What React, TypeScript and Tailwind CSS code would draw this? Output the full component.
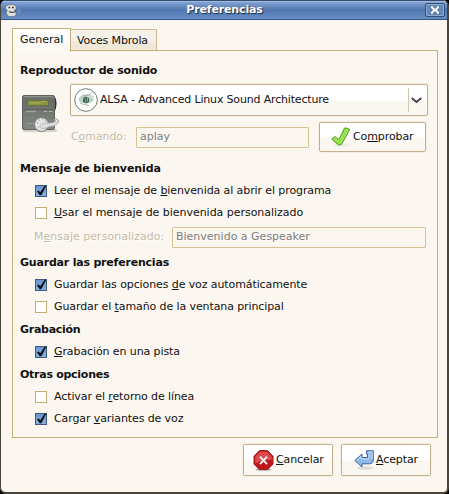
import type { ReactNode } from 'react';

function Key({ children }: { children: ReactNode }) {
  return <span className="underline decoration-1 underline-offset-1 [text-decoration-skip-ink:none]">{children}</span>;
}

function Heading({ className = 'tracking-[-0.2px]', children }: { className?: string; children: ReactNode }) {
  return <h2 className={`flex h-[22px] items-center pt-[2px] pl-[7px] text-[11px] font-bold text-[#111] ${className}`}>{children}</h2>;
}

function Check({ on = false, className = 'tracking-[-0.1px]', children }: { on?: boolean; className?: string; children: ReactNode }) {
  return (
    <label className={`flex h-[22px] items-center pl-[22px] ${className}`}>
      <span
        className={
          on
            ? 'mt-[2px] h-3 w-3 border border-[#3d5878] bg-linear-to-b from-[#6895cd] to-[#86b2e2]'
            : 'mt-[2px] h-3 w-3 border border-[#c7ad78] bg-white'
        }
      >
        {on && (
          <svg viewBox="0 0 10 10" className="h-[10px] w-[10px] overflow-visible">
            <path d="M1 5.200 2.800 4.400 4.200 6.300 8.700-.2 10.200-.3 5.500 9 3.900 9.500Z" fill="#0a0f16" />
          </svg>
        )}
      </span>
      <span className="ml-[7px] pt-[2px] leading-[14px]">{children}</span>
    </label>
  );
}

function Button({ className, children }: { className: string; children: ReactNode }) {
  return (
    <button
      className={`flex items-center rounded-[2px] border border-[#c0b08b] bg-linear-to-b from-white from-50% to-[#faf7f1] to-55% shadow-[0_0_0_1px_#f4efe4] ${className}`}
    >
      {children}
    </button>
  );
}

function Player() {
  return (
    <svg viewBox="0 0 38 38" className="h-[38px] w-[38px] shrink-0">
      <defs>
        <linearGradient id="body" x1="0" y1="0" x2="0" y2="1">
          <stop offset="0" stopColor="#7b7d78" />
          <stop offset=".15" stopColor="#686b66" />
          <stop offset="1" stopColor="#858983" />
        </linearGradient>
      </defs>
      <rect x="1" y="34" width="34" height="3" rx="1.5" fill="#d6d1c8" />
      <path d="M31 2h2l1 3v8l-1 3v17h-3Z" fill="#343634" />
      <rect x=".5" y=".5" width="32" height="34" rx="1.5" fill="url(#body)" stroke="#60625e" />
      <path d="M2 1.500h29" stroke="#92948f" />
      <path d="M33 3c2 2 2 9 0 11Z" fill="#343634" />
      <rect x="5.500" y="5.500" width="21" height="5" fill="#8b9540" stroke="#6a7048" />
      <path d="M7 8h12M19 6.500h5" stroke="#a8b250" />
      <path d="M1 14.500h31" stroke="#5d605b" />
      <path d="M4 16.500h10" stroke="#b0b2ad" strokeWidth="1.500" strokeDasharray="1.500 .6" />
      <path d="M22 16.500h3M27 16.500h3M5 28.500h1.500M8 28.500h1.500M11 28.500h1.500" stroke="#b5b7b2" />
      <ellipse cx="19.500" cy="29.500" rx="7" ry="7" fill="#e5e5e5" stroke="#777" />
      <path d="M17 25h1M20 24h1M23 26h1M15 28h1M16 32h1" stroke="#8b8b8b" />
      <path d="M19 29.500c3-2 7-1 13-2 1-1 1-2 0-3l2-1 3 2-1 3-4 2.500c-5 0-8 2.500-11 2.500-3 0-4-2-2-4Z" fill="#dedede" stroke="#a0a0a0" strokeWidth=".6" />
      <circle cx="34.500" cy="26" r="1.300" fill="#faf7f1" stroke="#9b9b9b" strokeWidth=".6" />
    </svg>
  );
}

function Alsa() {
  return (
    <svg viewBox="0 0 24 24" className="h-6 w-6 shrink-0">
      <circle cx="12" cy="12" r="11.300" fill="#fff" stroke="#727c76" />
      <path d="M4 12c3-5 12-5 16-.5-3 5-12 5.500-16 .5Z" fill="#b4d4c4" />
      <path d="M8 7.500c5-1 9 0 10-3.500M5 10c4-3 11-3 15-1M6 15c3 2 6 1 9 3" fill="none" stroke="#96a49c" strokeWidth=".8" />
      <ellipse cx="12" cy="12" rx="3" ry="3.200" fill="#3d544b" />
      <path d="M11 9.500 12 15M13.500 9v4.500" stroke="#a1c7b9" strokeWidth=".8" />
    </svg>
  );
}

function Tick() {
  return (
    <svg viewBox="0 0 20 20" className="h-5 w-5 shrink-0">
      <ellipse cx="11" cy="18" rx="8" ry="1.700" fill="#efece6" />
      <path d="M.8 12 4 9.500l4 3L13.500 1h2l3.300 1.500L10.500 17.500l-3 .5Z" fill="#7ed321" stroke="#58a02c" strokeLinejoin="round" />
      <path d="m2.500 12 1.700-1 4 3.300L14.500 2.700l2.500.6-7 12.700-1.700.5Z" fill="#8fdf45" stroke="#b8ef85" strokeWidth=".7" />
    </svg>
  );
}

function Stop() {
  return (
    <svg viewBox="0 0 21 21" className="h-[21px] w-[21px] shrink-0">
      <ellipse cx="10.500" cy="19.500" rx="8" ry="1.300" fill="#aaa49e" />
      <path d="M6.500.5h8l5.500 5.800v7.900l-5.500 5.300h-8L1 14.200V6.300Z" fill="#c2141b" stroke="#9c2024" />
      <path d="M7 1.700h7l4.800 5v3c-6 .2-11 1-16.600 3.800v-7Z" fill="#d94b4d" />
      <path d="m7 6.700 7 7.400m0-7.400-7 7.400" stroke="#f4f4f4" strokeWidth="1.900" />
    </svg>
  );
}

function Enter() {
  return (
    <svg viewBox="0 0 20 20" className="h-5 w-5 shrink-0">
      <ellipse cx="11" cy="18" rx="8" ry="1.800" fill="#dedbd6" />
      <path d="M.8 10.500 8 4v3.500h5.500V4.200h-1V.7h6.800v9.100c0 2.500-1.500 4-4 4H8V17Z" fill="#8db8e4" stroke="#3f69a3" strokeLinejoin="round" />
      <path d="m2.500 10.500 4.500-4V9h8V2h3v7" fill="none" stroke="#c5dcf3" />
    </svg>
  );
}

function TitleBar() {
  return (
    <header className="flex h-5 shrink-0 items-center border-t border-b border-t-[#344c70] border-b-[#34527f] bg-linear-to-b from-[#84a4d4] from-5% via-[#5177b0] via-50% to-[#688fc5] pr-[2px] pl-[4px] shadow-[inset_0_1px_0_#9db9df]">
      <svg viewBox="0 0 16 14" className="mt-[2px] h-[14px] w-4">
        <path d="M1.500 1.500 4 .7h5l2 1.300v3.500L9.500 6v1l1.500 1v2.500L9 12.500H4L2 11l-.7-3L2.500 6.500.7 5V3Z" fill="#e0dfdb" stroke="#6d7580" strokeWidth=".7" />
        <path d="M3.500 3.500h1.700M7 3.500h1.700" stroke="#333" strokeWidth="1.500" />
        <path d="M4 7.500c2 1.300 4 1.300 7 0" fill="none" stroke="#4a4a48" strokeWidth="1.200" />
        <path d="M12.500 5q1.500 2 0 4M14 3.500q2 3.500 0 7" fill="none" stroke="#78a0d4" strokeWidth=".7" />
      </svg>
      <h1 className="flex-1 pb-px pl-[3px] text-center text-[11px] font-bold leading-none tracking-[-0.15px] text-white [text-shadow:1px_1px_1px_#142640]">Preferencias</h1>
      <button className="flex h-[14px] w-[20px] items-center justify-center rounded-[2px] border border-[#304f7b] bg-[#648abc] shadow-[inset_0_0_0_1px_#8eabd1]">
        <svg viewBox="0 0 10 10" className="h-[10px] w-[10px] shrink-0">
          <path d="M.5.8h3v1.400L5 3.500l1.500-1.300V.8h3v2L7.300 5l2.200 2.200v2h-3V7.800L5 6.500 3.500 7.800v1.400h-3v-2L2.700 5 .5 2.800Z" fill="white" stroke="#34527f" strokeWidth=".6" />
        </svg>
      </button>
    </header>
  );
}

export default function App() {
  return (
    <div className="h-[494px] w-[449px] bg-black">
      <main className="flex h-[494px] w-[449px] flex-col overflow-hidden rounded-[6px] border-r-2 border-b-2 border-l border-[#49453a] bg-[#fbf7f0] font-['DejaVu_Sans','Liberation_Sans',sans-serif] text-[11px] leading-[14px] text-[#111]">
        <TitleBar />
        <nav className="mt-[7px] ml-[11px] flex h-6 items-end">
          <div className="z-10 -mb-px h-6 w-[59px] border border-b-0 border-[#c7ad78] bg-linear-to-b from-white to-[#fbf8f2] pt-[4px] pl-[7px]">General</div>
          <div className="h-[22px] w-[86px] border border-b-0 border-l-0 border-[#cbb894] bg-linear-to-b from-[#f7f2e9] from-50% to-[#efe8d9] to-55% pt-[4px] pl-[6px] tracking-[-0.15px]">Voces Mbrola</div>
        </nav>
        <section className="-mt-px ml-[11px] h-[388px] w-[426px] shrink-0 border border-[#c7ad78] pt-[8px]">
          <Heading>Reproductor de sonido</Heading>
          <div className="mt-[3px] flex pl-[9px]">
            <div className="w-[48px] pt-[11px]"><Player /></div>
            <div>
              <div className="flex h-8 w-[358px] items-center rounded-[2px] border border-[#c0b08b] bg-linear-to-b from-white from-50% to-[#faf7f1] to-55% pl-[3px] shadow-[0_0_0_1px_#f4efe4]">
                <Alsa />
                <span className="ml-[2px] flex-1 tracking-[-0.17px]">ALSA - Advanced Linux Sound Architecture</span>
                <span className="h-6 w-px bg-[#cfc5b2]" />
                <svg viewBox="0 0 18 10" className="h-[10px] w-[18px]"><path d="m2.700 3 4.800 4 4.800-4" fill="none" stroke="#444" strokeWidth="1.900" /></svg>
              </div>
              <div className="mt-[6px] flex h-[30px] items-center">
                <span className="w-[66px] pl-px tracking-[-0.08px] text-[#c7baa5] [text-shadow:1px_1px_0_white]">C<Key>o</Key>mando:</span>
                <div className="flex h-[21px] w-[173px] items-center rounded-[1px] border border-[#d5c295] pl-[3px] text-[#7e7e7e]">aplay</div>
                <Button className="ml-[10px] h-[30px] w-[107px] pl-[11px]"><Tick /><span className="ml-[2px] tracking-[-0.1px]">Co<Key>m</Key>probar</span></Button>
              </div>
            </div>
          </div>
          <div className="h-[5px]" />
          <Heading className="tracking-[-0.1px]">Mensaje de bienvenida</Heading>
          <Check on>Leer el mensaje de <Key>b</Key>ienvenida al abrir el programa</Check>
          <Check className="tracking-[-0.03px]"><Key>U</Key>sar el mensaje de bienvenida personalizado</Check>
          <div className="mt-[3px] mb-[3px] flex h-[22px] items-center pl-[21px]">
            <span className="w-[138px] tracking-[0.03px] text-[#c7baa5] [text-shadow:1px_1px_0_white]">M<Key>e</Key>nsaje personalizado:</span>
            <div className="flex h-[21px] w-[254px] items-center rounded-[1px] border border-[#d5c295] pl-[3px] text-[#7e7e7e]">Bienvenido a Gespeaker</div>
          </div>
          <Heading>Guardar las preferencias</Heading>
          <Check on>Guardar las opciones <Key>d</Key>e voz automáticamente</Check>
          <Check>Guardar el <Key>t</Key>amaño de la ventana principal</Check>
          <div className="h-px" />
          <Heading className="tracking-[-0.27px]">Grabación</Heading>
          <Check on><Key>G</Key>rabación en una pista</Check>
          <div className="h-px" />
          <Heading className="tracking-[-0.27px]">Otras opciones</Heading>
          <Check>Activar el <Key>r</Key>etorno de línea</Check>
          <Check on>Cargar <Key>v</Key>ariantes de voz</Check>
        </section>
        <footer className="mt-[6px] flex justify-end gap-[8px] pr-4">
          <Button className="h-8 w-[90px] pl-[9px]"><Stop /><span className="ml-[2px] tracking-[-0.1px]"><Key>C</Key>ancelar</span></Button>
          <Button className="h-8 w-[90px] pl-[12px]"><Enter /><span className="ml-[2px] tracking-[-0.1px]"><Key>A</Key>ceptar</span></Button>
        </footer>
      </main>
    </div>
  );
}
